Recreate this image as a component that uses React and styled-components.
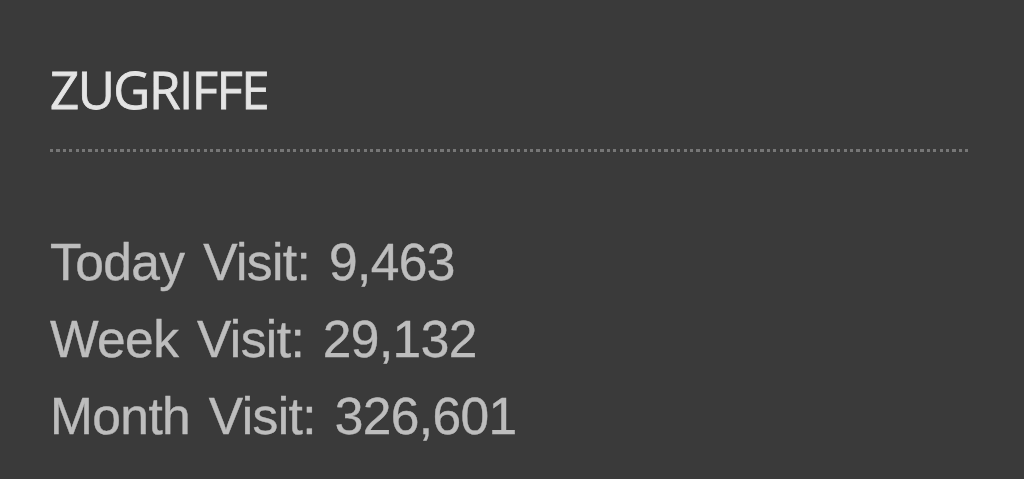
import React from "react";
import styled, { createGlobalStyle } from "styled-components";

const Global = createGlobalStyle`
  html, body { margin: 0; padding: 0; background: #3a3a3a; }
  body { width: 1024px; height: 479px; overflow: hidden; }
`;

const Widget = styled.section`
  box-sizing: border-box;
  width: 1024px;
  height: 479px;
  padding: 63px 54px 0 50px;
  background: #3a3a3a;
  display: flex;
  flex-direction: column;
`;

const Title = styled.h3`
  margin: 0;
  font-family: "Open Sans", "DejaVu Sans", sans-serif;
  font-weight: 400;
  font-size: 51px;
  line-height: 52px;
  letter-spacing: -1.5px;
  color: #e4e4e4;
  -webkit-text-stroke: 0.8px #e4e4e4;
`;

const Divider = styled.div`
  margin-top: 34px;
  height: 3px;
  background: repeating-linear-gradient(
    to right,
    #767676 0 3.3px,
    transparent 3.3px 6.4px
  );
`;

const List = styled.ul`
  list-style: none;
  margin: 72px 0 0;
  padding: 0;
`;

const Item = styled.li`
  font-family: "Liberation Sans", Arial, sans-serif;
  font-size: 51.5px;
  line-height: 77px;
  color: #bdbdbd;
  letter-spacing: -0.6px;
  word-spacing: 5px;
  -webkit-text-stroke: 0.4px #bdbdbd;
`;

const stats = [
  ["Today Visit", "9,463"],
  ["Week Visit", "29,132"],
  ["Month Visit", "326,601"],
];

export default function App() {
  return (
    <>
      <Global />
      <Widget>
        <Title>ZUGRIFFE</Title>
        <Divider />
        <List>
          {stats.map(([label, value]) => (
            <Item key={label}>
              {label}: {value}
            </Item>
          ))}
        </List>
      </Widget>
    </>
  );
}
